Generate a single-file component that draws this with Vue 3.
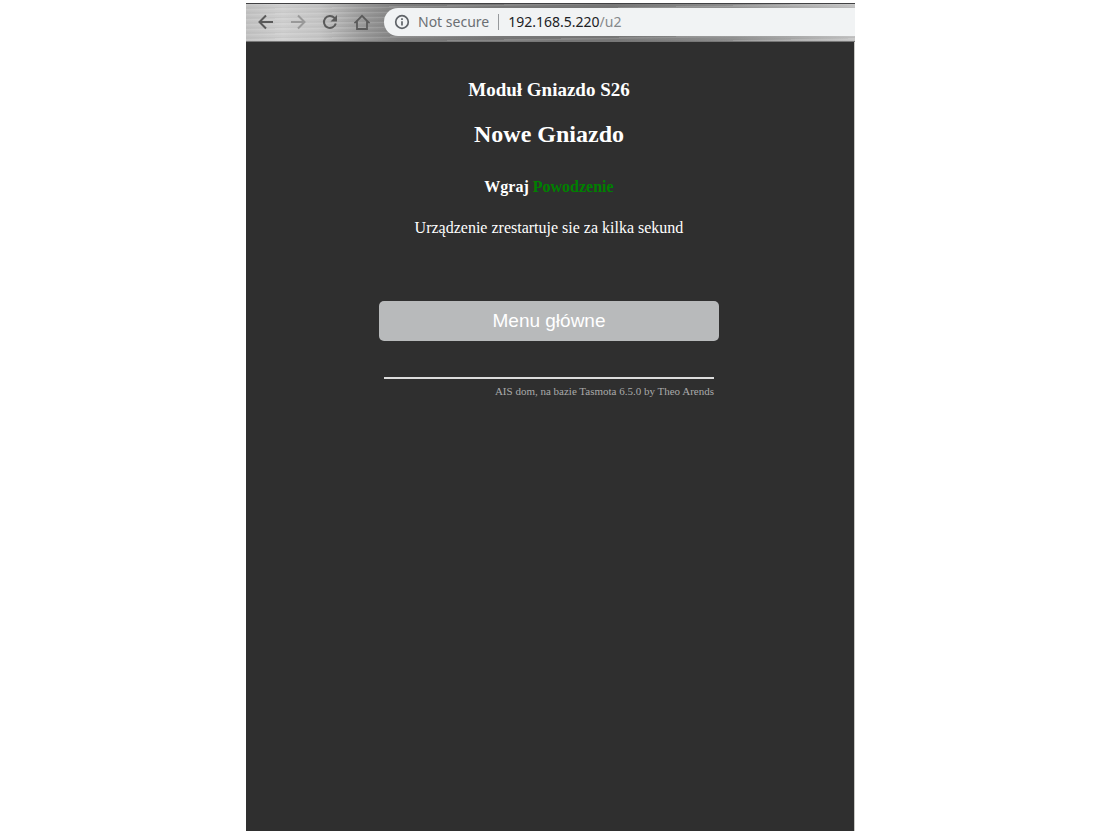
<script setup>
const device = { module: 'Moduł Gniazdo S26', name: 'Nowe Gniazdo' }
</script>

<template>
  <div class="desktop">
    <div class="window">
      <header class="toolbar">
        <nav class="nav">
          <button type="button" class="nav-btn" aria-label="Back">
            <svg viewBox="0 0 16 16"><path d="M15 8H2M8 1.500 1.500 8 8 14.500" /></svg>
          </button>
          <button type="button" class="nav-btn faded" aria-label="Forward">
            <svg viewBox="0 0 16 16"><path d="M1 8h13M8 1.500 14.500 8 8 14.500" /></svg>
          </button>
          <button type="button" class="nav-btn" aria-label="Reload">
            <svg viewBox="0 0 16 16">
              <path d="M13.800 9.500A6 6 0 1 1 12.400 3.900L13.500 5" />
              <path class="solid" d="M15 1v6.500H8.500z" />
            </svg>
          </button>
          <button type="button" class="nav-btn" aria-label="Home">
            <svg viewBox="0 0 16 16"><path class="outline" d="M1.500 8.300 8 1.800l6.500 6.500H13V15H3V8.300z" /></svg>
          </button>
        </nav>
        <div class="address">
          <svg class="info" viewBox="0 0 16 16">
            <circle cx="8" cy="8" r="6.300" />
            <path d="M8 7.200v4.300M8 4.300v1.700" />
          </svg>
          <span class="security">Not secure</span>
          <span class="divider"></span>
          <span class="url">192.168.5.220<span class="path">/u2</span></span>
        </div>
      </header>
      <main class="page">
        <div class="panel">
          <h3>{{ device.module }}</h3>
          <h2>{{ device.name }}</h2>
          <p class="status">Wgraj <span class="ok">Powodzenie</span></p>
          <p class="note">Urządzenie zrestartuje sie za kilka sekund</p>
          <button type="button" class="menu">Menu główne</button>
          <footer>AIS dom, na bazie Tasmota 6.5.0 by Theo Arends</footer>
        </div>
      </main>
    </div>
  </div>
</template>

<style>
body {
  margin: 0;
  background: #fff;
}
</style>

<style scoped>
.desktop {
  box-sizing: border-box;
  min-height: 100vh;
  padding: 3px 245px 3px 246px;
  display: flex;
}
.window {
  flex: 1;
  min-width: 0;
  display: flex;
  flex-direction: column;
}
.toolbar {
  box-sizing: border-box;
  height: 39px;
  padding-bottom: 1px;
  display: flex;
  align-items: center;
  border-top: 1px solid #414143;
  border-bottom: 1px solid #777;
  background:
    repeating-linear-gradient(179deg, rgba(255, 255, 255, 0.12) 0 1px, transparent 2px 3px, rgba(0, 0, 0, 0.03) 4px, transparent 5px),
    linear-gradient(90deg, #c0c0c0 0, #cecece 6%, #c4c4c4 12%, #999 19%, #808080 25%, #777 40%, #777 60%, #909090 80%, #c4c4c4 100%);
}
.nav {
  display: flex;
  gap: 16px;
  padding: 0 14px 0 12px;
}
.nav-btn {
  width: 16px;
  height: 16px;
  padding: 0;
  border: 0;
  background: none;
  color: #5a5a5a;
}
.nav-btn.faded {
  color: #999;
}
svg {
  display: block;
  width: 16px;
  height: 16px;
  fill: none;
  stroke: currentColor;
  stroke-width: 2;
}
.solid {
  fill: currentColor;
  stroke: none;
}
.outline {
  stroke-width: 1.8;
}
.address {
  flex: 1;
  height: 28px;
  box-sizing: border-box;
  padding-left: 10px;
  display: flex;
  align-items: center;
  border-radius: 14px 0 0 14px;
  background: #f1f3f4;
  font: 14px/20px "Noto Sans", sans-serif;
  color: #202124;
  white-space: nowrap;
}
.info {
  color: #5f6368;
  stroke-width: 1.7;
}
.security {
  margin-left: 8px;
  color: #6b6f73;
}
.divider {
  width: 1px;
  height: 16px;
  margin: 0 9px;
  background: #96999c;
}
.path {
  color: #85888b;
}
.page {
  flex: 1;
  padding: 37px 2px 0 0;
  border-right: 1px solid #c8c8c4;
  background: #2f2f2f;
  color: #fff;
  font-family: "Liberation Serif", serif;
}
.panel {
  width: 340px;
  max-width: 100%;
  margin: 0 auto;
  text-align: center;
}
h3 {
  margin: 0;
  font-size: 19px;
  line-height: 22px;
}
h2 {
  margin: 19px 0 0;
  font-size: 24px;
  line-height: 28px;
}
.status {
  margin: 30px 0 0;
  font-size: 16px;
  line-height: 18px;
  font-weight: bold;
}
.ok {
  color: #008000;
}
.note {
  margin: 23px 0 0;
  font-size: 16px;
  line-height: 18px;
}
.menu {
  display: block;
  width: 100%;
  height: 40px;
  margin: 64px 0 36px;
  padding: 0;
  border: 0;
  border-radius: 5px;
  background: #b8babb;
  color: #fff;
  font: 19px/40px "Liberation Sans", sans-serif;
}
footer {
  margin: 0 5px;
  padding-top: 6px;
  border-top: 2px solid #ddd;
  color: #aaa;
  font-size: 11px;
  line-height: 13px;
  text-align: right;
}
</style>
